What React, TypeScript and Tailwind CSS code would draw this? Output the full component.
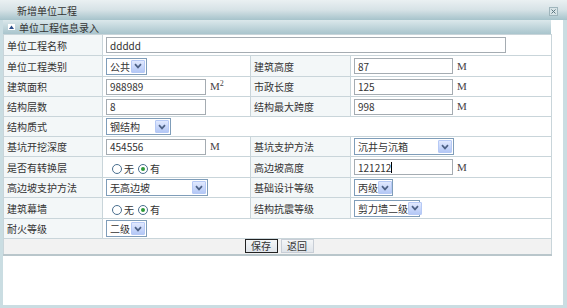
import React from 'react'

const font = { fontFamily: '"Noto Sans CJK SC", "Liberation Sans", sans-serif' }

function Input({ className, value, caret }: { className: string; value: string; caret?: boolean }) {
  return (
    <div className={`flex items-center h-[16px] border border-[#a5acb2] bg-white pl-[3px] text-[10px] text-[#333] ${className}`}>
      <span>{value}</span>
      {caret && <span className="w-px h-[11px] bg-black" />}
    </div>
  )
}

function Select({ className, text }: { className: string; text: string }) {
  return (
    <div className={`flex items-center h-[17px] border border-[#7f9db9] bg-white text-[10px] text-[#333] ${className}`}>
      <span className="flex-1 pl-[3px] whitespace-nowrap">{text}</span>
      <span className="shrink-0 w-[14px] h-[13px] mr-px flex items-center justify-center rounded-[1px] border border-[#b6c9f5] bg-gradient-to-b from-[#e1e9fe] to-[#b4c8f6]">
        <svg width="8" height="6" viewBox="0 0 8 6">
          <path d="M1 1.2 L4 4.4 L7 1.2" stroke="#4d6185" strokeWidth="1.7" fill="none" />
        </svg>
      </span>
    </div>
  )
}

function Unit({ sup }: { sup?: boolean }) {
  return (
    <span className="ml-[4px] text-[11px] text-[#444]" style={{ fontFamily: '"Liberation Serif", serif' }}>
      M{sup && <sup className="text-[8px]">2</sup>}
    </span>
  )
}

function Radio() {
  return (
    <div className="flex items-center pl-[6px] pt-[3px] text-[10px] text-[#333]">
      <span className="w-[10px] h-[10px] rounded-full border border-[#4a6f8f] bg-white" />
      <span className="ml-[2px] mr-[4px]">无</span>
      <span className="w-[10px] h-[10px] rounded-full border border-[#4a6f8f] bg-white flex items-center justify-center">
        <span className="w-[4px] h-[4px] rounded-full bg-[#2f9a3a]" />
      </span>
      <span className="ml-[2px]">有</span>
    </div>
  )
}

const label = 'border border-[#c9d5da] bg-[#f3f7f8] pl-[3px] text-[10px] text-[#333] align-middle'
const cell = 'border border-[#c9d5da] bg-white pl-[3px] align-middle'

export default function App() {
  return (
    <div className="w-[567px] h-[308px] bg-[#cadde2] flex flex-col" style={font}>
      {/* title bar */}
      <div className="h-[20px] flex items-center justify-between bg-gradient-to-b from-[#eaf0f2] via-[#d6e2e6] to-[#a6c3cb] pl-[17px] pr-[9px]">
        <span className="text-[10px] text-[#333]">新增单位工程</span>
        <span className="w-[9px] h-[9px] mt-[2px] border border-[#9fb5bc] bg-[#d8e4e7] flex items-center justify-center">
          <svg width="5" height="5" viewBox="0 0 5 5">
            <path d="M0.5 0.5 L4.5 4.5 M4.5 0.5 L0.5 4.5" stroke="#5c7680" strokeWidth="1" />
          </svg>
        </span>
      </div>

      <div className="flex-1 ml-[3px] mr-[4px] mb-[3px] bg-white flex flex-col">
        <div className="w-[548px]">
          {/* panel header */}
          <div className="h-[14px] flex items-center bg-gradient-to-b from-[#dbe8eb] to-[#a9c5cd] pl-[5px]">
            <span className="w-[7px] h-[6px] bg-white flex items-center justify-center mr-[4px]">
              <svg width="5" height="4" viewBox="0 0 5 4">
                <path d="M0 4 L2.5 0.5 L5 4 Z" fill="#2d4f8c" />
              </svg>
            </span>
            <span className="text-[10px] text-[#333]">单位工程信息录入</span>
          </div>

          <table className="w-[548px] border-collapse table-fixed">
            <colgroup>
              <col className="w-[99px]" />
              <col className="w-[148px]" />
              <col className="w-[100px]" />
              <col className="w-[201px]" />
            </colgroup>
            <tbody>
              <tr className="h-[21px]">
                <td className={label}>单位工程名称</td>
                <td className={cell} colSpan={3}>
                  <Input className="w-[400px]" value="ddddd" />
                </td>
              </tr>
              <tr className="h-[21px]">
                <td className={label}>单位工程类别</td>
                <td className={cell}>
                  <Select className="w-[41px]" text="公共" />
                </td>
                <td className={label}>建筑高度</td>
                <td className={cell}>
                  <div className="flex items-end">
                    <Input className="w-[99px]" value="87" />
                    <Unit />
                  </div>
                </td>
              </tr>
              <tr className="h-[20px]">
                <td className={label}>建筑面积</td>
                <td className={cell}>
                  <div className="flex items-end">
                    <Input className="w-[100px]" value="988989" />
                    <Unit sup />
                  </div>
                </td>
                <td className={label}>市政长度</td>
                <td className={cell}>
                  <div className="flex items-end">
                    <Input className="w-[99px]" value="125" />
                    <Unit />
                  </div>
                </td>
              </tr>
              <tr className="h-[20px]">
                <td className={label}>结构层数</td>
                <td className={cell}>
                  <Input className="w-[100px]" value="8" />
                </td>
                <td className={label}>结构最大跨度</td>
                <td className={cell}>
                  <div className="flex items-end">
                    <Input className="w-[99px]" value="998" />
                    <Unit />
                  </div>
                </td>
              </tr>
              <tr className="h-[20px]">
                <td className={label}>结构质式</td>
                <td className={`${cell} border-r-white`}>
                  <Select className="w-[65px]" text="钢结构" />
                </td>
                <td className={`${cell} border-l-white`} colSpan={2}></td>
              </tr>
              <tr className="h-[20px]">
                <td className={label}>基坑开挖深度</td>
                <td className={cell}>
                  <div className="flex items-end">
                    <Input className="w-[100px]" value="454556" />
                    <Unit />
                  </div>
                </td>
                <td className={label}>基坑支护方法</td>
                <td className={cell}>
                  <Select className="w-[100px]" text="沉井与沉箱" />
                </td>
              </tr>
              <tr className="h-[21px]">
                <td className={label}>是否有转换层</td>
                <td className={cell}>
                  <Radio />
                </td>
                <td className={label}>高边坡高度</td>
                <td className={cell}>
                  <div className="flex items-end">
                    <Input className="w-[99px]" value="121212" caret />
                    <Unit />
                  </div>
                </td>
              </tr>
              <tr className="h-[20px]">
                <td className={label}>高边坡支护方法</td>
                <td className={cell}>
                  <Select className="w-[102px]" text="无高边坡" />
                </td>
                <td className={label}>基础设计等级</td>
                <td className={cell}>
                  <Select className="w-[39px]" text="丙级" />
                </td>
              </tr>
              <tr className="h-[21px]">
                <td className={label}>建筑幕墙</td>
                <td className={cell}>
                  <Radio />
                </td>
                <td className={label}>结构抗震等级</td>
                <td className={cell}>
                  <Select className="w-[66px]" text="剪力墙二级" />
                </td>
              </tr>
              <tr className="h-[20px]">
                <td className={label}>耐火等级</td>
                <td className={cell} colSpan={3}>
                  <Select className="w-[41px]" text="二级" />
                </td>
              </tr>
              <tr className="h-[16px]">
                <td className="border border-[#c9d5da] border-b-2 border-b-[#b9c6cb] bg-[#f2f2f2]" colSpan={4}>
                  <div className="flex justify-center gap-[3px] pl-[3px]">
                    <button className="w-[33px] h-[14px] border border-[#222] bg-gradient-to-b from-[#f4f6f8] to-[#dfe4ea] text-[10px] leading-none text-[#333]">
                      保存
                    </button>
                    <button className="w-[33px] h-[14px] border border-[#c8ced6] bg-gradient-to-b from-[#f4f6f8] to-[#dfe4ea] text-[10px] leading-none text-[#333]">
                      返回
                    </button>
                  </div>
                </td>
              </tr>
            </tbody>
          </table>
        </div>
      </div>
    </div>
  )
}
